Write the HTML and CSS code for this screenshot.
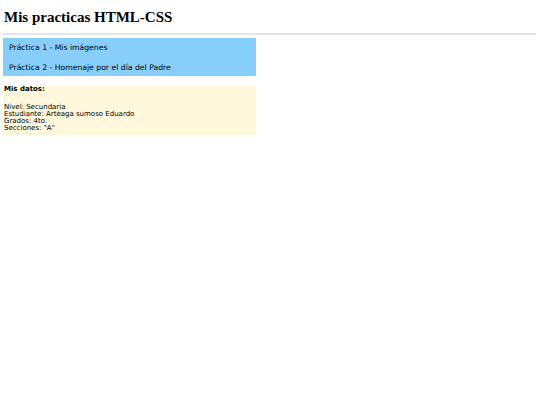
FILE: index.html
```html
<!DOCTYPE html>
<html lang="es">
<head>
<meta charset="utf-8">
<title>Mis practicas HTML-CSS</title>
<link rel="stylesheet" href="styles.css">
</head>
<body>
<header class="top">
  <h1 class="title">Mis practicas HTML-CSS</h1>
</header>
<hr class="rule">
<nav class="menu">
  <a class="menu-item" href="#">Práctica 1 - Mis imágenes</a>
  <a class="menu-item" href="#">Práctica 2 - Homenaje por el día del Padre</a>
</nav>
<section class="datos">
  <h4 class="datos-title">Mis datos:</h4>
  <p class="datos-text">Nivel: Secundaria<br>Estudiante: Arteaga sumoso Eduardo<br>Grados: 4to.<br>Secciones: "A"</p>
</section>
</body>
</html>
```

FILE: styles.css
```css
html, body {
  margin: 0;
  padding: 0;
  background: #ffffff;
}
body {
  padding: 3px 4px 0 3px;
  font-family: "DejaVu Sans", Verdana, sans-serif;
  color: #000;
}
.top {
  padding: 6px 0 0 1px;
}
.title {
  margin: 0;
  font-family: "Liberation Serif", "Times New Roman", serif;
  font-weight: bold;
  font-size: 15px;
  line-height: 17px;
}
.rule {
  margin: 7px 0 3px 0;
  border: 0;
  height: 2px;
  background: #e3e3e3;
}
.menu {
  width: 253px;
  height: 38px;
  background: #87cefa;
  display: flex;
  flex-direction: column;
  gap: 2px;
  padding: 1px 0 0 0;
  box-sizing: border-box;
}
.menu-item {
  display: block;
  padding: 0 6px;
  font-size: 7.7px;
  line-height: 17.5px;
  color: #000;
  text-decoration: none;
}
.datos {
  width: 253px;
  margin-top: 10px;
  background: #fff8dc;
  padding: 0 0 0 1px;
  box-sizing: border-box;
}
.datos-title {
  margin: 0;
  font-size: 7px;
  font-weight: bold;
  line-height: 7.5px;
}
.datos-text {
  margin: 10px 0 0 0;
  padding-bottom: 3px;
  font-size: 7px;
  line-height: 7.2px;
}
```
